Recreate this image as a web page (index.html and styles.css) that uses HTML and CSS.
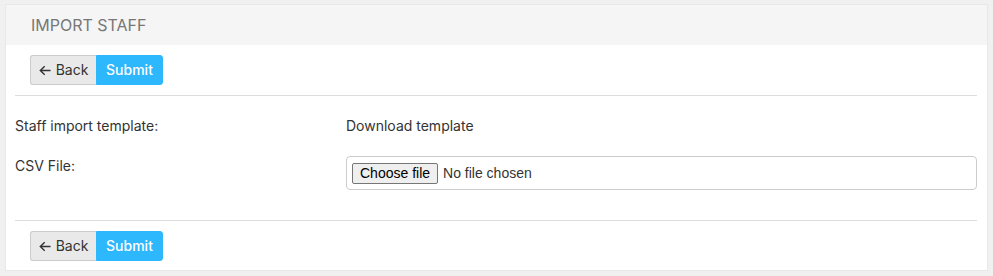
FILE: index.html
```html
<!DOCTYPE html>
<html>
<head>
<meta charset="utf-8">
<link rel="stylesheet" href="styles.css">
</head>
<body>
<div class="card">
  <div class="card-header">IMPORT STAFF</div>
  <div class="card-body">
    <div class="actions">
      <div class="btn-group">
        <button class="btn btn-back"><svg class="arrow" width="12" height="11" viewBox="0 0 12 11"><path d="M11.5 5.5H1.5M5.7 1.2L1.3 5.5L5.7 9.8" fill="none" stroke="#333" stroke-width="1.4"/></svg>Back</button>
        <button class="btn btn-submit">Submit</button>
      </div>
    </div>
    <div class="form">
      <div class="row">
        <div class="label">Staff import template:</div>
        <div class="value"><a class="link">Download template</a></div>
      </div>
      <div class="row second">
        <div class="label">CSV File:</div>
        <div class="value">
          <div class="file-box">
            <span class="file-btn">Choose file</span><span class="file-text">No file chosen</span>
          </div>
        </div>
      </div>
    </div>
    <div class="actions bottom">
      <div class="btn-group">
        <button class="btn btn-back"><svg class="arrow" width="12" height="11" viewBox="0 0 12 11"><path d="M11.5 5.5H1.5M5.7 1.2L1.3 5.5L5.7 9.8" fill="none" stroke="#333" stroke-width="1.4"/></svg>Back</button>
        <button class="btn btn-submit">Submit</button>
      </div>
    </div>
  </div>
</div>
</body>
</html>
```
FILE: styles.css
```css
html, body {
  margin: 0;
  padding: 0;
  background: #f0f0f0;
}
body {
  padding: 4px 5px;
  font-family: "Inter", "Noto Sans", sans-serif;
  font-size: 14px;
  color: #333;
}
.card {
  background: #fff;
  border: 1px solid #e8e8e8;
  height: 267px;
  box-sizing: border-box;
}
.card-header {
  background: #f5f5f5;
  height: 40px;
  box-sizing: border-box;
  padding: 10px 0 0 25px;
  font-size: 16px;
  color: #777;
  line-height: 20px;
}
.card-body {
  padding: 0 10px 0 9px;
}
.actions {
  padding: 10px 0 10px 15px;
  border-bottom: 1px solid #ddd;
}
.actions.bottom {
  border-bottom: none;
  border-top: 1px solid #ddd;
}
.btn-group {
  display: flex;
}
.btn {
  height: 30px;
  font-family: inherit;
  font-size: 14px;
  line-height: 20px;
  padding: 0;
  margin: 0;
  white-space: nowrap;
  display: flex;
  align-items: center;
  justify-content: center;
  cursor: pointer;
}
.btn-back {
  background: #e9e9e9;
  border: 1px solid #ccc;
  border-right: none;
  color: #333;
  border-radius: 3px 0 0 3px;
  width: 66px;
  gap: 5px;
}
.btn-submit {
  background: #2db7fc;
  border: 1px solid #2db7fc;
  color: #fff;
  font-weight: 500;
  border-radius: 0 3px 3px 0;
  width: 67px;
}
.arrow {
  display: block;
}
.form {
  padding: 20px 0 30px 0;
}
.row {
  display: grid;
  grid-template-columns: 331px 1fr;
}
.row.second {
  margin-top: 20px;
}
.label, .value {
  line-height: 20px;
}
.link {
  color: #333;
}
.file-box {
  border: 1px solid #ccc;
  border-radius: 4px;
  height: 34px;
  box-sizing: border-box;
  padding: 0 5px;
  display: flex;
  align-items: center;
  font-family: "Liberation Sans", Arial, sans-serif;
  font-size: 14px;
}
.file-btn {
  display: inline-block;
  height: 21px;
  line-height: 19px;
  box-sizing: border-box;
  padding: 0 7px;
  border: 1px solid #767676;
  border-radius: 2px;
  background: #efefef;
  color: #000;
  margin-right: 5px;
}
.file-text {
  color: #333;
}
```
